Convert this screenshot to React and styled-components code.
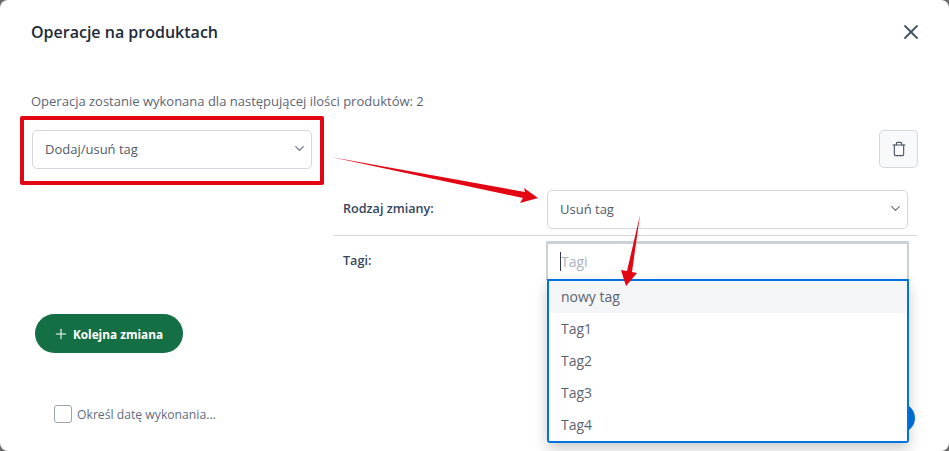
import styled, { createGlobalStyle } from 'styled-components';
import { ChevronDown, Plus, Trash, X } from 'lucide-react';

const GlobalStyle = createGlobalStyle`
	html, body {
		margin: 0;
		padding: 0;
		height: 100%;
		overflow: hidden;
		background: #6b6b6b;
	}

	* {
		box-sizing: border-box;
	}
`;

const Modal = styled.div`
	display: flex;
	flex-direction: column;
	width: 949px;
	height: 451px;
	padding: 0 31px 0 32px;
	background: #fff;
	border-radius: 8px;
	font-family: 'Open Sans', sans-serif;
	color: #404b5a;
	overflow: hidden;
	position: relative;
`;

const Header = styled.header`
	display: flex;
	align-items: center;
	justify-content: space-between;
	height: 64px;
	margin: 0 -5px 0 -1px;
`;

const Title = styled.h2`
	margin: 0;
	font-size: 16px;
	font-weight: 600;
	color: #1c2b3a;
`;

const CloseButton = styled.button`
	display: flex;
	padding: 0;
	border: 0;
	background: none;
	color: #3f5560;
`;

const Summary = styled.p`
	margin: 28px -1px 0;
	font-size: 13px;
	line-height: 18px;
	color: #5b6573;
`;

const Changes = styled.div`
	display: flex;
	gap: 22px;
	margin-top: 20px;
`;

const MainField = styled.div`
	align-self: flex-start;
	width: 280px;
	flex-shrink: 0;
	position: relative;
`;

const Highlight = styled.div`
	position: absolute;
	inset: -14px -12px -16px -12px;
	border: 4px solid #e30613;
	border-radius: 2px;
	pointer-events: none;
`;

const Select = styled.div`
	display: flex;
	align-items: center;
	justify-content: space-between;
	height: 39px;
	padding: 0 4px 2px 12px;
	border: 1px solid #d3d6dd;
	border-radius: 5px;
	background: #fff;
	font-size: 13px;
	color: #505b69;

	svg {
		color: #6b7582;
	}
`;

const Details = styled.div`
	flex: 1;
	display: flex;
	flex-direction: column;
`;

const TrashRow = styled.div`
	display: flex;
	justify-content: flex-end;
	height: 60px;
`;

const TrashButton = styled.button`
	display: flex;
	align-items: center;
	justify-content: center;
	width: 39px;
	height: 38px;
	padding: 0;
	border: 1px solid #d3d6dd;
	border-radius: 5px;
	background: #f8f9fa;
	color: #4a5563;
`;

const FieldRow = styled.div`
	display: grid;
	grid-template-columns: 1fr 361px;
	align-items: ${(props) => (props.$top ? 'start' : 'center')};
	margin-right: 1px;
	padding: 0 9px;
	padding-bottom: ${(props) => (props.$divider ? '6px' : '0')};
	margin-bottom: ${(props) => (props.$divider ? '5px' : '0')};
	border-bottom: ${(props) => (props.$divider ? '1px solid #d3d6dd' : '0')};
`;

const FieldLabel = styled.label`
	font-size: 12.6px;
	font-weight: 600;
	color: #34465c;
	padding-top: ${(props) => (props.$top ? '11px' : '0')};
	padding-bottom: ${(props) => (props.$top ? '0' : '2px')};
`;

const TagPicker = styled.div`
	position: relative;
	height: 39px;
`;

const TagInput = styled.div`
	display: flex;
	align-items: center;
	height: 39px;
	margin: 0 -1px;
	padding: 0 0 2px 12px;
	border: 2px solid #ccd0d7;
	border-top-width: 3px;
	border-bottom: 0;
	border-radius: 2px 2px 0 0;
	background: #fff;
	font-size: 14px;
	color: #a9b2c0;
`;

const Caret = styled.span`
	display: block;
	width: 1px;
	height: 19px;
	background: #333c48;
`;

const TagList = styled.ul`
	position: absolute;
	z-index: 2;
	top: 38px;
	left: 0;
	right: -1px;
	margin: 0;
	padding: 0;
	list-style: none;
	background: #fff;
	border: 2px solid #0073de;
	border-radius: 0 0 3px 3px;
	box-shadow: 0 6px 14px rgba(0, 0, 0, 0.2);
`;

const TagOption = styled.li`
	display: flex;
	align-items: center;
	height: 32px;
	padding: 0 0 2px 12px;
	font-size: 14px;
	color: #5c6470;
	background: ${(props) => (props.$active ? '#f4f5f7' : '#fff')};
`;

const AddButton = styled.button`
	display: flex;
	align-items: center;
	justify-content: center;
	gap: 4px;
	width: 148px;
	height: 39px;
	margin: 0 0 0 3px;
	padding: 0 2px 0 0;
	border: 0;
	border-radius: 20px;
	background: #156f45;
	color: #fff;
	font-family: inherit;
	font-size: 11.8px;
	font-weight: 700;
`;

const AddRow = styled.div`
	margin-top: 34px;
`;

const Footer = styled.footer`
	display: flex;
	align-items: flex-start;
	justify-content: space-between;
	margin-top: 52px;
	margin-right: 3px;
	padding-left: 22px;
`;

const DateOption = styled.label`
	display: flex;
	align-items: center;
	gap: 5px;
	font-size: 12.2px;
	color: #5f6d80;
`;

const CheckBox = styled.span`
	display: block;
	width: 18px;
	height: 18px;
	border: 1px solid #9aa3b0;
	border-radius: 3px;
	background: #fff;
`;

const SaveButton = styled.button`
	width: 120px;
	height: 30px;
	margin-top: -2px;
	padding: 0;
	border: 0;
	border-radius: 15px;
	background: #0073de;
`;

const Arrows = styled.svg`
	position: absolute;
	z-index: 3;
	top: 0;
	left: 0;
	pointer-events: none;
`;

const tags = ['nowy tag', 'Tag1', 'Tag2', 'Tag3', 'Tag4'];

const App = () => {
	return (
		<>
			<GlobalStyle />
			<Modal>
				<Header>
					<Title>Operacje na produktach</Title>
					<CloseButton>
						<X size={24} strokeWidth={1.8} />
					</CloseButton>
				</Header>
				<Summary>
					Operacja zostanie wykonana dla następującej ilości produktów: 2
				</Summary>
				<Changes>
					<MainField>
						<Select>
							Dodaj/usuń tag
							<ChevronDown size={15} />
						</Select>
						<Highlight />
					</MainField>
					<Details>
						<TrashRow>
							<TrashButton>
								<Trash size={16} strokeWidth={1.7} />
							</TrashButton>
						</TrashRow>
						<FieldRow $divider>
							<FieldLabel>Rodzaj zmiany:</FieldLabel>
							<Select>
								Usuń tag
								<ChevronDown size={15} />
							</Select>
						</FieldRow>
						<FieldRow $top>
							<FieldLabel $top>Tagi:</FieldLabel>
							<TagPicker>
								<TagInput>
									<Caret />
									Tagi
								</TagInput>
								<TagList>
									{tags.map((tag, index) => (
										<TagOption key={tag} $active={index === 0}>
											{tag}
										</TagOption>
									))}
								</TagList>
							</TagPicker>
						</FieldRow>
					</Details>
				</Changes>
				<AddRow>
					<AddButton>
						<Plus size={16} strokeWidth={1.6} />
						Kolejna zmiana
					</AddButton>
				</AddRow>
				<Footer>
					<DateOption>
						<CheckBox />
						Określ datę wykonania...
					</DateOption>
					<SaveButton />
				</Footer>
				<Arrows width="949" height="451" viewBox="0 0 949 451">
					<path
						d="M331 157 L525 192 L524 188 L538 198 L520 203 L523 198 Z"
						fill="#e30613"
					/>
					<path
						d="M640 215 L632 272 L637 273 L626 286 L621 270 L627 271 Z"
						fill="#e30613"
					/>
				</Arrows>
			</Modal>
		</>
	);
};

export default App;
